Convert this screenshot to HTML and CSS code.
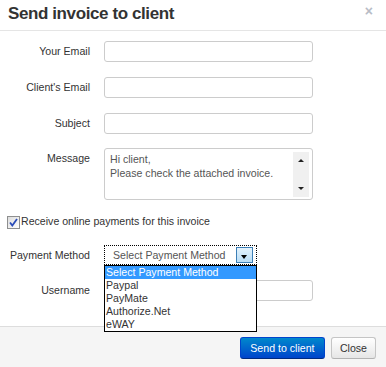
FILE: index.html
```html
<!DOCTYPE html>
<html>
<head>
    <title>Send invoice to client</title>
    <link rel="stylesheet" href="styles.css">
</head>
<body>
    <div class="modal">
        <div class="modal-header">
            <h3>Send invoice to client</h3>
            <span class="close">&times;</span>
        </div>

        <div class="modal-body">
            <div class="row">
                <label>Your Email</label>
                <input type="text" class="field">
            </div>
            <div class="row">
                <label>Client's Email</label>
                <input type="text" class="field">
            </div>
            <div class="row row-subject">
                <label>Subject</label>
                <input type="text" class="field">
            </div>
            <div class="row">
                <label>Message</label>
                <div class="textarea-wrap">
                    <textarea class="message">Hi client,
Please check the attached invoice.</textarea>
                    <div class="scrollbar">
                        <span class="arrow-up"></span>
                        <span class="arrow-down"></span>
                    </div>
                </div>
            </div>

            <div class="check-row">
                <span class="checkbox">
                    <svg width="13" height="13" viewBox="0 0 13 13">
                        <defs>
                            <linearGradient id="cb" x1="0" y1="0" x2="1" y2="1">
                                <stop offset="0" stop-color="#dcdcdc"/>
                                <stop offset="1" stop-color="#ffffff"/>
                            </linearGradient>
                        </defs>
                        <rect x="0.5" y="0.5" width="12" height="12" fill="url(#cb)" stroke="#8e8f8f"/>
                        <path d="M3 6.5 L5.3 9.5 L10 3" fill="none" stroke="#2a4cb8" stroke-width="1.8"/>
                    </svg>
                </span>
                Receive online payments for this invoice
            </div>

            <div class="row row-payment">
                <label>Payment Method</label>
                <div class="select-wrap">
                    <div class="select">
                        <span>Select Payment Method</span>
                        <span class="select-btn"><span class="tri"></span></span>
                    </div>
                    <ul class="dropdown">
                        <li class="selected">Select Payment Method</li>
                        <li>Paypal</li>
                        <li>PayMate</li>
                        <li>Authorize.Net</li>
                        <li>eWAY</li>
                    </ul>
                </div>
            </div>

            <div class="row row-username">
                <label>Username</label>
                <input type="text" class="field">
            </div>
        </div>

        <div class="modal-footer">
            <button class="btn btn-primary">Send to client</button>
            <button class="btn">Close</button>
        </div>
    </div>
</body>
</html>
```

FILE: styles.css
```css
body {
    margin: 0;
    font-family: "Liberation Sans", Arial, sans-serif;
    font-size: 10.6px;
    color: #333;
    background: white;
}
.modal {
    width: 386px;
    height: 367px;
    overflow: hidden;
    display: flex;
    flex-direction: column;
}
.modal-header {
    height: 30px;
    border-bottom: 1px solid #e5e5e5;
    display: flex;
    justify-content: space-between;
    align-items: flex-start;
    padding: 0 13px 0 8px;
    flex-shrink: 0;
}
.modal-header h3 {
    margin: 0;
    font-size: 17px;
    line-height: 27px;
    letter-spacing: -0.4px;
    font-weight: bold;
    color: #333;
}
.close {
    font-size: 14px;
    font-weight: bold;
    line-height: 22px;
    color: #b8bcc6;
}
.modal-body {
    padding-top: 10px;
    flex-grow: 1;
}
.row {
    display: flex;
    align-items: flex-start;
    margin-bottom: 15px;
}
.row label {
    width: 90px;
    margin-right: 14px;
    text-align: right;
    line-height: 21px;
    flex-shrink: 0;
}
.row-subject {
    margin-bottom: 14px;
}
.field {
    width: 209px;
    height: 21px;
    box-sizing: border-box;
    border: 1px solid #ccc;
    border-radius: 3px;
    margin: 0;
    padding: 2px 5px;
    font: inherit;
}
.textarea-wrap {
    position: relative;
    width: 209px;
    height: 52px;
}
.message {
    width: 209px;
    height: 52px;
    box-sizing: border-box;
    border: 1px solid #ccc;
    border-radius: 3px;
    margin: 0;
    padding: 3px 5px;
    font: inherit;
    line-height: 14px;
    color: #555;
    resize: none;
    overflow: hidden;
}
.scrollbar {
    position: absolute;
    top: 4px;
    right: 4px;
    width: 16px;
    height: 45px;
    background: #f0f0f0;
}
.arrow-up, .arrow-down {
    position: absolute;
    left: 5px;
    width: 0;
    height: 0;
    border-left: 3px solid transparent;
    border-right: 3px solid transparent;
}
.arrow-up {
    top: 7px;
    border-bottom: 3px solid #222;
}
.arrow-down {
    bottom: 7px;
    border-top: 3px solid #222;
}
.check-row {
    display: flex;
    align-items: flex-start;
    margin-top: 2px;
    padding-left: 7px;
    height: 14px;
    line-height: 12px;
    gap: 1px;
}
.checkbox {
    display: block;
    width: 13px;
    height: 13px;
    margin-top: 1px;
}
.checkbox svg {
    display: block;
}
.row-payment {
    margin-top: 16px;
    margin-bottom: 15px;
}
.row-payment label {
    line-height: 20px;
}
.select-wrap {
    position: relative;
}
.select {
    width: 153px;
    height: 20px;
    box-sizing: border-box;
    border: 1px dotted #000;
    display: flex;
    align-items: center;
    justify-content: space-between;
    padding: 0 3px 0 8px;
    color: #555;
}
.select-btn {
    width: 17px;
    height: 16px;
    box-sizing: border-box;
    border: 1px solid #3d7fb6;
    background: linear-gradient(#e3f2fc, #b9ddf6);
    position: relative;
}
.tri {
    position: absolute;
    left: 4px;
    bottom: 3px;
    width: 0;
    height: 0;
    border-left: 3.5px solid transparent;
    border-right: 3.5px solid transparent;
    border-top: 4px solid #000;
}
.dropdown {
    position: absolute;
    top: 20px;
    left: 0;
    width: 153px;
    box-sizing: border-box;
    margin: 0;
    padding: 0;
    list-style: none;
    background: white;
    border: 1px solid #000;
    z-index: 2;
}
.dropdown li {
    height: 13px;
    line-height: 13px;
    padding-left: 1px;
    color: #333;
    white-space: nowrap;
}
.dropdown li.selected {
    background: #3399ff;
    color: white;
}
.modal-footer {
    height: 30px;
    border-top: 1px solid #ddd;
    background: #f5f5f5;
    display: flex;
    justify-content: flex-end;
    align-items: flex-start;
    gap: 6px;
    padding: 10px 10px 0 0;
    flex-shrink: 0;
}
.btn {
    height: 22px;
    padding: 0 8px;
    font: inherit;
    white-space: nowrap;
    color: #333;
    border: 1px solid #c5c5c5;
    border-bottom-color: #b3b3b3;
    border-radius: 3px;
    background: linear-gradient(#ffffff, #e6e6e6);
    cursor: pointer;
}
.btn-primary {
    width: 85px;
    padding: 0;
    color: white;
    border-color: #0044cc #0044cc #002a80;
    background: linear-gradient(#0088cc, #0044cc);
}
```
